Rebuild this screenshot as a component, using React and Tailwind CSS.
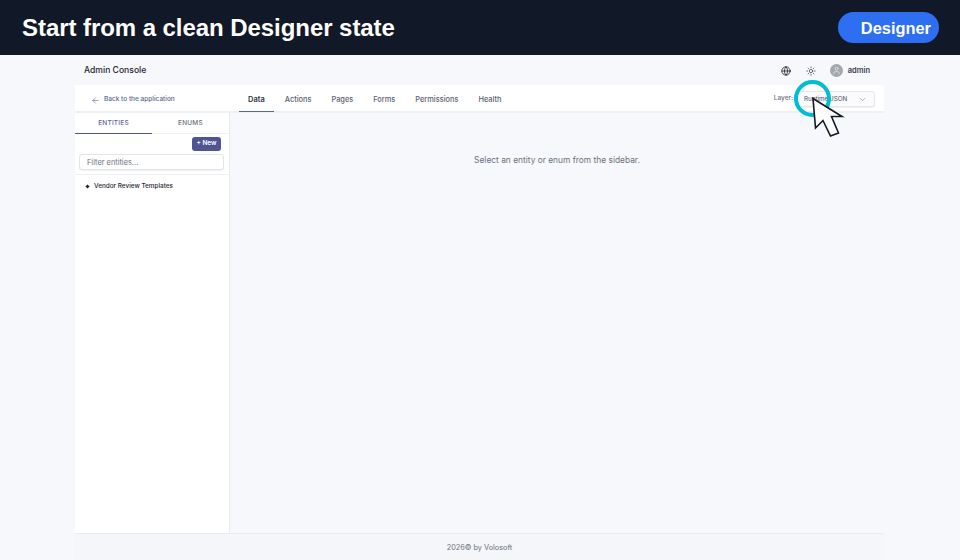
import React from "react";
import { ArrowLeft, Globe, Sun, ChevronDown, User } from "lucide-react";

const tabs = ["Data", "Actions", "Pages", "Forms", "Permissions", "Health"];

export default function App() {
  return (
    <div className="relative h-[560px] w-[960px] overflow-hidden bg-[#f7f8fb] font-['Inter',sans-serif]">
      <header className="flex h-[55px] items-center justify-between bg-[#111827] pl-[22px] pr-[21px]">
        <h1 className="font-['Liberation_Sans',sans-serif] text-[24px] font-bold tracking-[-0.06px] text-white">Start from a clean Designer state</h1>
        <div className="flex h-[31px] w-[101px] items-center justify-end rounded-full bg-[#2e6ff2] pr-[8px] pt-[1px] font-['Liberation_Sans',sans-serif] text-[16.4px] font-bold text-white">Designer</div>
      </header>

      <div className="mx-[75px] flex h-[505px] w-[809px] flex-col">
        <div className="flex h-[30px] items-center justify-between pl-[9px] pr-[14px] pt-[1px]">
          <span className="text-[8.6px] font-medium text-[#1f2433]">Admin Console</span>
          <div className="flex items-center text-[#1f2433]">
            <Globe size={10} strokeWidth={2} />
            <Sun size={10} strokeWidth={1.8} className="ml-[15px] text-[#3a3f4e]" />
            <span className="ml-[14px] flex h-[13px] w-[13px] items-center justify-center rounded-full bg-[#a3a7b0]">
              <User size={9} strokeWidth={2} className="text-[#e5e6ea]" />
            </span>
            <span className="ml-[5px] text-[7.5px] font-semibold text-[#3a3f4e]">admin</span>
          </div>
        </div>

        <div className="flex h-[28px] border-b-2 border-[#eef0f4] bg-white">
          <div className="flex w-[155px] items-center pl-[16px] pt-[4px] text-[#5a6597]">
            <ArrowLeft size={9} strokeWidth={1.6} />
            <span className="ml-[4px] text-[6.5px] font-medium">Back to the application</span>
          </div>
          <nav className="ml-[9px] flex flex-1 items-center">
            {tabs.map((t, i) => (
              <div
                key={t}
                className={
                  i === 0
                    ? "relative mr-[1px] flex h-[26px] items-center justify-center px-[9px] pt-[3px] text-[7.5px] font-semibold text-[#2a2f3d]"
                    : "flex h-[26px] items-center px-[10px] pt-[3px] text-[7.4px] font-medium text-[#5b6070]"
                }
              >
                {t}
                {i === 0 && <span className="absolute bottom-[-1px] left-0 h-[1px] w-full bg-[#5a6597]" />}
              </div>
            ))}
          </nav>
          <div className="mr-[9px] flex items-center pt-[2px]">
            <span className="mr-[3px] text-[6.5px] font-medium text-[#6b7080]">Layer:</span>
            <div className="flex h-[16px] w-[79px] items-center justify-between rounded-[3px] border border-[#e5e7ec] bg-[#fbfbfd] pl-[7px] pr-[7px] shadow-[0_1px_1px_#eef0f4]">
              <span className="pt-[2px] text-[6.3px] text-[#4a4f5e]">Runtime JSON</span>
              <ChevronDown size={9} strokeWidth={1.4} className="text-[#6b7080]" />
            </div>
          </div>
        </div>

        <div className="flex min-h-0 flex-1">
          <aside className="flex w-[155px] flex-col border-r border-[#e9ebf0] bg-white">
            <div className="flex h-[21px] border-b border-[#eef0f4]">
              <div className="relative flex w-[77px] items-center justify-center pt-[2px] text-[6.5px] font-medium tracking-[0.2px] text-[#5a6597]">
                ENTITIES
                <span className="absolute bottom-[-1px] left-0 h-[1px] w-full bg-[#4d5596]" />
              </div>
              <div className="flex flex-1 items-center justify-center pt-[2px] text-[6.5px] font-medium tracking-[0.2px] text-[#6b7080]">ENUMS</div>
            </div>
            <div className="flex flex-col border-b border-[#eef0f4] pb-[4px] pl-[4px] pr-[5px] pt-[3px]">
              <div className="flex justify-end pr-[3px]">
                <span className="flex h-[14px] w-[29px] items-center justify-center rounded-[3px] bg-[#4f5592] text-[6.5px] font-semibold text-white">+ New</span>
              </div>
              <div className="mt-[3px] flex h-[16px] items-center rounded-[3px] border border-[#e3e5ea] bg-white pl-[7px] pt-[1px] text-[7.4px] text-[#6b7080] shadow-[0_1px_1px_#eef0f4]">Filter entities...</div>
            </div>
            <div className="flex items-center pl-[10.5px] pt-[7px] text-[6.4px] font-medium text-[#1f2433]">
              <span className="h-[3px] w-[3px] rotate-45 bg-[#1f2433]" />
              <span className="ml-[5.5px]">Vendor Review Templates</span>
            </div>
          </aside>
          <main className="flex flex-1 justify-center pt-[41px] text-[8.4px] text-[#6b7080]">
            <span className="h-[14px]">Select an entity or enum from the sidebar.</span>
          </main>
        </div>

        <footer className="flex h-[27px] items-center justify-center border-t border-[#e9ebf0] bg-[#f5f6f9] pt-[2px] text-[7.3px] text-[#6b7080]">
          2026© by Volosoft
        </footer>
      </div>

      <div className="absolute left-[794px] top-[80px] h-[37px] w-[37px] rounded-full border-[4px] border-[#00bcd4]" />
      <svg className="absolute left-[805px] top-[90px]" width="45" height="52" viewBox="805 90 45 52">
        <polygon points="813,98.5 842,116.5 831.5,116.5 838.5,133 830.5,136 823,120.5 815.5,128" fill="#fff" stroke="#111827" strokeWidth="1.6" strokeLinejoin="miter" />
      </svg>
    </div>
  );
}
